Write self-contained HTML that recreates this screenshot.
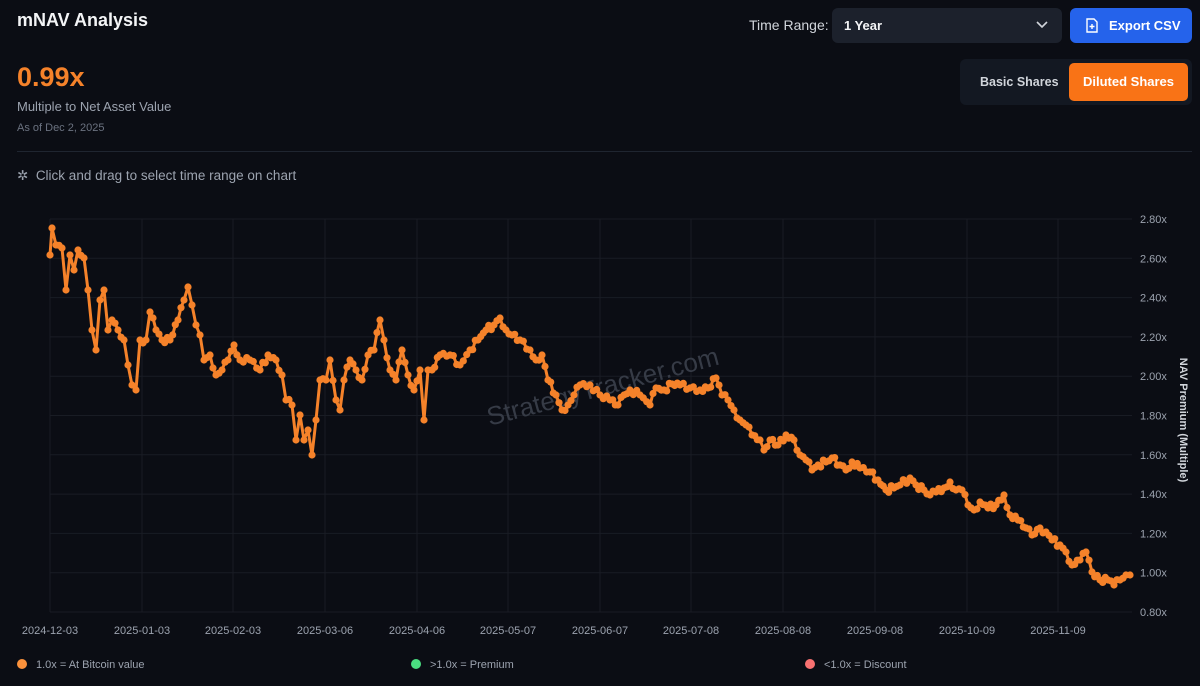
<!DOCTYPE html>
<html><head><meta charset="utf-8"><style>
body{margin:0;width:1200px;height:686px;background:#0b0d14;font-family:"Liberation Sans",sans-serif;color:#e5e7eb;overflow:hidden;position:relative}
.a{position:absolute}
</style></head><body>
<div class="a" style="left:17px;top:10px;font-size:18px;font-weight:bold;color:#f3f4f6">mNAV Analysis</div>
<div class="a" style="left:17px;top:62px;font-size:27px;font-weight:bold;color:#f5822a">0.99x</div>
<div class="a" style="left:17px;top:99px;font-size:13px;color:#9ca3af">Multiple to Net Asset Value</div>
<div class="a" style="left:17px;top:122px;font-size:11px;color:#6b7280">As of Dec 2, 2025</div>
<div class="a" style="left:17px;top:151px;width:1175px;height:1px;background:#1f2530"></div>
<div class="a" style="left:17px;top:168px;font-size:13.5px;color:#9ca3af">✲&nbsp; Click and drag to select time range on chart</div>
<div class="a" style="left:749px;top:17px;font-size:14px;color:#d1d5db">Time Range:</div>
<div class="a" style="left:832px;top:8px;width:230px;height:35px;background:#1c212c;border-radius:6px"><span class="a" style="left:12px;top:10px;font-size:13px;font-weight:bold;color:#f3f4f6">1 Year</span><svg class="a" style="left:204px;top:13px" width="12" height="8"><path d="M1 1l5 5 5-5" stroke="#d1d5db" stroke-width="1.6" fill="none"/></svg></div>
<div class="a" style="left:1070px;top:8px;width:122px;height:35px;background:#2563eb;border-radius:6px;font-size:13px;font-weight:bold;color:#fff"><svg class="a" style="left:16px;top:10px" width="12" height="15"><path d="M1 1h7l3 3v10H1z M6 6v5 M3.5 8.5h5" stroke="#fff" stroke-width="1.4" fill="none"/></svg><span class="a" style="left:39px;top:10px">Export CSV</span></div>
<div class="a" style="left:960px;top:59px;width:232px;height:46px;background:#131822;border-radius:6px"></div>
<div class="a" style="left:980px;top:75px;font-size:12.5px;font-weight:bold;color:#d1d5db">Basic Shares</div>
<div class="a" style="left:1069px;top:63px;width:119px;height:38px;background:#f97316;border-radius:5px;font-size:13px;font-weight:bold;color:#fff;text-align:center;line-height:38px">Diluted Shares</div>
<svg class="a" style="left:0;top:0" width="1200" height="686" id="s">
<g stroke="#191c24" stroke-width="1" id="grid"></g>
<text x="605" y="395" transform="rotate(-15 605 395)" text-anchor="middle" font-size="26" fill="#363b46" font-family="Liberation Sans">StrategyTracker.com</text>
<g id="yl" font-size="11" fill="#9ca3af" font-family="Liberation Sans"></g>
<g id="xl" font-size="11" fill="#9ca3af" font-family="Liberation Sans" text-anchor="middle"></g>
<text transform="translate(1180 420) rotate(90)" text-anchor="middle" font-size="11" font-weight="bold" fill="#d1d5db">NAV Premium (Multiple)</text>
<polyline id="pl" fill="none" stroke="#f5822a" stroke-width="3" stroke-linejoin="round"/>
<g id="pts" fill="#f5822a"></g>
<circle cx="22" cy="664" r="5" fill="#fb923c"/><text x="36" y="668" font-size="11" fill="#9ca3af">1.0x = At Bitcoin value</text>
<circle cx="416" cy="664" r="5" fill="#4ade80"/><text x="430" y="668" font-size="11" fill="#9ca3af">&gt;1.0x = Premium</text>
<circle cx="810" cy="664" r="5" fill="#f87171"/><text x="824" y="668" font-size="11" fill="#9ca3af">&lt;1.0x = Discount</text>
</svg>
<script>
var ns="http://www.w3.org/2000/svg";function el(p,t,a,tx){var e=document.createElementNS(ns,t);for(var k in a)e.setAttribute(k,a[k]);if(tx)e.textContent=tx;document.getElementById(p).appendChild(e);}
var xs=[50,142,233,325,417,508,600,691,783,875,967,1058],lb=["2024-12-03","2025-01-03","2025-02-03","2025-03-06","2025-04-06","2025-05-07","2025-06-07","2025-07-08","2025-08-08","2025-09-08","2025-10-09","2025-11-09"];
for(var i=0;i<11;i++){var y=219+i*39.3;el("grid","line",{x1:50,x2:1132,y1:y,y2:y});el("yl","text",{x:1140,y:y+4},(2.8-i*0.2).toFixed(2)+"x");}
xs.forEach(function(x,i){el("grid","line",{x1:x,x2:x,y1:219,y2:612});el("xl","text",{x:x,y:634},lb[i]);});
var k=[50,255,52,228,56,245,62,248,66,290,70,255,74,270,78,250,84,258,88,290,92,330,96,350,100,300,104,290,108,330,112,320,118,330,124,340,128,365,132,385,136,390,140,340,146,340,150,312,156,330,162,340,170,340,178,320,184,300,188,287,192,305,196,325,200,335,204,360,210,355,216,375,222,370,228,360,234,345,240,360,250,360,260,370,268,355,276,360,282,375,286,400,292,405,296,440,300,415,304,440,308,430,312,455,316,420,320,380,326,380,330,360,336,400,340,410,344,380,350,360,356,370,362,380,368,355,374,350,380,320,384,340,390,370,396,380,402,350,408,375,414,390,420,370,424,420,428,370,432,370,440,355,450,355,460,365,470,350,478,340,486,330,494,325,500,318,506,330,512,335,520,340,530,350,536,360,542,355,548,380,556,395,562,410,568,405,574,395,580,385,590,385,600,395,610,400,618,405,624,395,630,390,640,395,650,405,656,388,664,390,672,384,680,385,690,388,700,390,708,388,716,378,722,395,728,400,734,410,740,420,746,425,752,435,760,440,764,450,770,440,778,445,786,435,794,440,800,455,806,460,812,470,818,465,826,462,832,458,840,465,846,470,852,462,860,468,870,472,878,480,886,490,894,488,900,485,910,478,916,485,924,490,930,495,936,492,944,488,950,482,956,490,962,490,968,505,974,510,980,502,988,508,996,505,1004,495,1010,515,1018,520,1026,528,1032,535,1040,528,1046,532,1052,540,1060,545,1066,552,1072,565,1080,560,1086,552,1092,572,1100,580,1108,580,1114,585,1120,580,1126,575,1130,575];
var p=[];for(var i=0;i<k.length-2;i+=2){var x0=k[i],y0=k[i+1],x1=k[i+2],y1=k[i+3],n=Math.max(1,Math.round((x1-x0)/3));for(var j=0;j<n;j++){var t=j/n;p.push([x0+(x1-x0)*t,y0+(y1-y0)*t+(j?Math.sin(i*7+j*3)*3:0)]);}}
p.push([1130,575]);
document.getElementById("pl").setAttribute("points",p.map(function(q){return q[0].toFixed(1)+","+q[1].toFixed(1)}).join(" "));
p.forEach(function(q){el("pts","circle",{cx:q[0].toFixed(1),cy:q[1].toFixed(1),r:3.6});});
</script>
</body></html>
